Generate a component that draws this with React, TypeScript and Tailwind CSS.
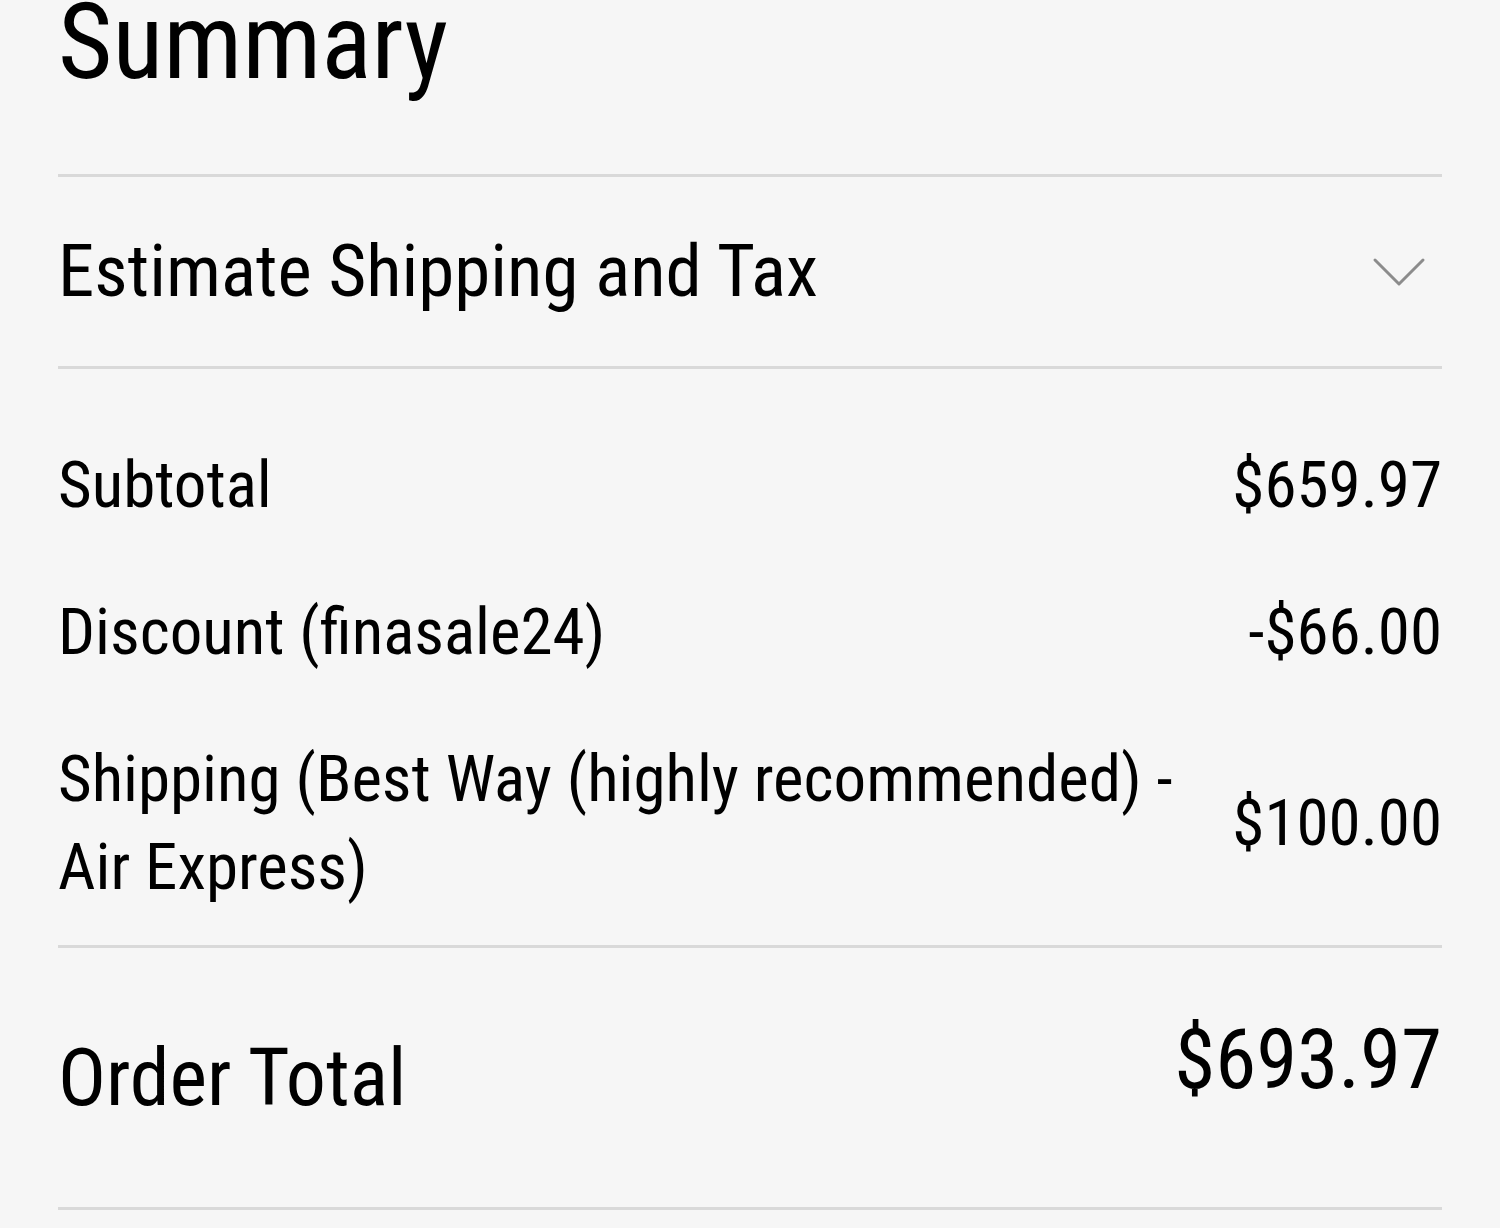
const rows = [
  { label: 'Subtotal', value: '$659.97' },
  { label: 'Discount (finasale24)', value: '-$66.00' },
  {
    label: 'Shipping (Best Way (highly recommended) - Air Express)',
    value: '$100.00',
  },
]

function Divider() {
  return <div className="h-[3px] w-full bg-[#d9d9d9]" />
}

function Chevron() {
  return (
    <svg
      width="54"
      height="30"
      viewBox="0 0 54 30"
      fill="none"
      stroke="#8c8c8c"
      strokeWidth="3"
      strokeLinecap="round"
      strokeLinejoin="round"
      className="mr-[16px]"
    >
      <polyline points="3,3 27,27 51,3" />
    </svg>
  )
}

export default function App() {
  return (
    <div className="min-h-screen bg-[#f6f6f6] px-[58px] font-['Roboto',sans-serif] font-stretch-condensed text-black">
      <div className="h-[174px]">
        <h1 className="text-[105px] leading-[86px]">Summary</h1>
      </div>
      <Divider />

      <button className="flex h-[189px] w-full items-center justify-between text-left">
        <span className="text-[73px] leading-none">Estimate Shipping and Tax</span>
        <Chevron />
      </button>
      <Divider />

      <div className="flex flex-col gap-[59px] pb-[34px] pt-[72px]">
        {rows.map((row) => (
          <div
            key={row.label}
            className="flex items-center justify-between text-[65px] leading-[88px]"
          >
            <span className="w-[1150px]">{row.label}</span>
            <span>{row.value}</span>
          </div>
        ))}
      </div>
      <Divider />

      <div className="flex h-[259px] items-center justify-between">
        <span className="text-[80px] leading-none">Order Total</span>
        <span className="mb-[36px] text-[83px] leading-none">$693.97</span>
      </div>
      <Divider />
    </div>
  )
}
